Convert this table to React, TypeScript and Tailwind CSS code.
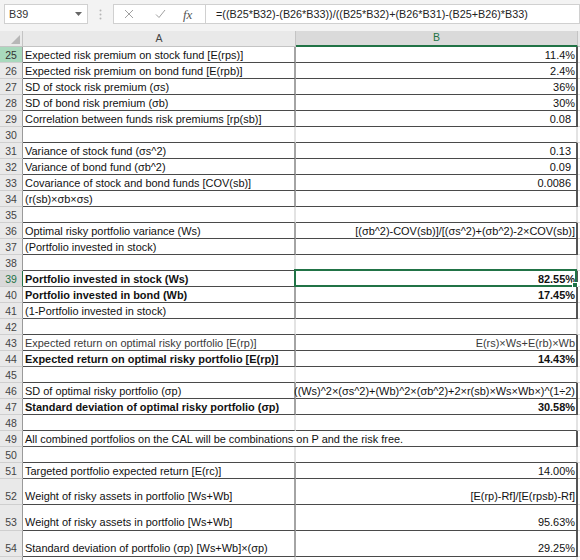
import React from "react";

type Row = {
  n: number;
  a?: string;
  b?: string;
  bold?: boolean;
  num?: boolean;
  bordered?: boolean;
  tall?: boolean;
  merged?: boolean;
  selected?: boolean;
  light?: boolean;
  hideNum?: boolean;
};

const rows: Row[] = [
  { n: 25, a: "Expected risk premium on stock fund [E(rps)]", b: "11.4%", bordered: true },
  { n: 26, a: "Expected risk premium on bond fund [E(rpb)]", b: "2.4%", bordered: true },
  { n: 27, a: "SD of stock risk premium (σs)", b: "36%", bordered: true },
  { n: 28, a: "SD of bond risk premium (σb)", b: "30%", bordered: true },
  { n: 29, a: "Correlation between funds risk premiums [rp(sb)]", b: "0.08", num: true, bordered: true },
  { n: 30 },
  { n: 31, a: "Variance of stock fund (σs^2)", b: "0.13", num: true, bordered: true },
  { n: 32, a: "Variance of bond fund (σb^2)", b: "0.09", num: true, bordered: true },
  { n: 33, a: "Covariance of stock and bond funds [COV(sb)]", b: "0.0086", num: true, bordered: true },
  { n: 34, a: "(r(sb)×σb×σs)", b: "", bordered: true },
  { n: 35 },
  { n: 36, a: "Optimal risky portfolio variance (Ws)", b: "[(σb^2)-COV(sb)]/[(σs^2)+(σb^2)-2×COV(sb)]", bordered: true },
  { n: 37, a: "(Portfolio invested in stock)", b: "", bordered: true },
  { n: 38 },
  { n: 39, a: "Portfolio invested in stock (Ws)", b: "82.55%", bold: true, bordered: true, selected: true },
  { n: 40, a: "Portfolio invested in bond (Wb)", b: "17.45%", bold: true, bordered: true },
  { n: 41, a: "(1-Portfolio invested in stock)", b: "", bordered: true },
  { n: 42 },
  { n: 43, a: "Expected return on optimal risky portfolio [E(rp)]", b: "E(rs)×Ws+E(rb)×Wb", bordered: true, light: true },
  { n: 44, a: "Expected return on optimal risky portfolio [E(rp)]", b: "14.43%", bold: true, bordered: true },
  { n: 45 },
  { n: 46, a: "SD of optimal risky portfolio (σp)", b: "((Ws)^2×(σs^2)+(Wb)^2×(σb^2)+2×r(sb)×Ws×Wb×)^(1÷2)", bordered: true },
  { n: 47, a: "Standard deviation of optimal risky portfolio (σp)", b: "30.58%", bold: true, bordered: true },
  { n: 48 },
  { n: 49, a: "All combined portfolios on the CAL will be combinations on P and the risk free.", bordered: true, merged: true },
  { n: 50 },
  { n: 51, a: "Targeted portfolio expected return [E(rc)]", b: "14.00%", bordered: true },
  { n: 52, a: "Weight of risky assets in portfolio [Ws+Wb]", b: "[E(rp)-Rf]/[E(rpsb)-Rf]", bordered: true, tall: true },
  { n: 53, a: "Weight of risky assets in portfolio [Ws+Wb]", b: "95.63%", bordered: true, tall: true },
  { n: 54, a: "Standard deviation of portfolio (σp) [Ws+Wb]×(σp)", b: "29.25%", bordered: true, tall: true },
  { n: 55, hideNum: true },
];

function SheetRow({ r, next }: { r: Row; next?: Row }) {
  const darkBottom = r.bordered || (next && next.bordered);
  const bottom = darkBottom ? "border-b-[#4a4a4a]" : "border-b-[#dcdcdc]";
  const h = r.tall ? "h-[26px]" : "h-[16px]";
  const align = r.tall ? "items-end pb-[2px]" : "items-center";
  const weight = r.bold ? "font-bold" : "font-normal";
  const color = r.light ? "text-[#3a3a3a]" : "text-[#111]";
  const sep = r.bordered ? "border-r-[#a4a4a4]" : "border-r-[#e3e3e3]";
  const right = r.bordered ? "border-r-[#555]" : "border-r-[#e3e3e3]";
  let headerCls = "bg-[#e9e9e9] text-[#444] border-r-[#9a9a9a]";
  if (r.n === 25) headerCls = "bg-[#a9d9bd] text-[#333] border-r-[#9a9a9a]";
  if (r.selected) headerCls = "bg-[#d9d9d9] text-[#217346] border-r-[#217346]";
  return (
    <div className={`flex ${h} shrink-0`}>
      <div
        className={`w-[23px] shrink-0 box-border border-r border-b border-b-[#cfcfcf] ${headerCls} flex ${align} justify-center text-[10.5px] leading-[12px]`}
      >
        {r.hideNum ? "" : r.n}
      </div>
      {r.merged ? (
        <div
          className={`w-[555px] shrink-0 box-border border-b border-r-2 ${bottom} border-r-[#555] flex ${align} pl-[2px] text-[10.95px] leading-[12px] whitespace-nowrap ${color} ${weight}`}
        >
          {r.a}
        </div>
      ) : (
        <>
          <div
            className={`w-[273px] shrink-0 box-border border-b border-r-2 ${bottom} ${sep} flex ${align} pl-[2px] text-[10.95px] leading-[12px] whitespace-nowrap ${color} ${weight}`}
          >
            {r.a}
          </div>
          <div
            className={`relative w-[282px] shrink-0 box-border border-b border-r-2 ${bottom} ${right} flex ${align} justify-end ${
              r.num ? "pr-[5px]" : "pr-[1px]"
            } text-[10.95px] leading-[12px] whitespace-nowrap ${color} ${weight}`}
          >
            {r.b}
            {r.selected && (
              <div className="absolute -top-[2px] -left-[2px] -right-[1px] -bottom-[1px] border-2 border-[#217346] pointer-events-none">
                <div className="absolute -right-[3px] -bottom-[3px] w-[6px] h-[6px] bg-[#217346] border border-white" />
              </div>
            )}
          </div>
        </>
      )}
      <div className={`flex-1 box-border border-b border-b-[#dcdcdc]`} />
    </div>
  );
}

export default function App() {
  return (
    <div className="w-[580px] h-[560px] overflow-hidden bg-white font-['Liberation_Sans',Arial,sans-serif] flex flex-col">
      {/* Formula bar */}
      <div className="h-[31px] shrink-0 bg-[#f3f3f3] flex items-start pt-[4px]">
        <div className="ml-[4px] w-[84px] h-[20px] bg-white border border-[#d0d0d0] flex items-center justify-between pl-[4px] pr-[5px] text-[10.8px] text-[#333]">
          <span>B39</span>
          <svg width="7" height="4" viewBox="0 0 7 4">
            <polygon points="0,0 7,0 3.5,4" fill="#666" />
          </svg>
        </div>
        <div className="w-[25px] h-[20px] flex items-center justify-center">
          <svg width="3" height="11" viewBox="0 0 3 11">
            <circle cx="1.5" cy="1.5" r="1" fill="#b5b5b5" />
            <circle cx="1.5" cy="5.5" r="1" fill="#b5b5b5" />
            <circle cx="1.5" cy="9.5" r="1" fill="#b5b5b5" />
          </svg>
        </div>
        <div className="flex-1 h-[20px] bg-white border border-[#d0d0d0] flex items-center">
          <div className="w-[92px] h-full flex items-center border-r border-[#d0d0d0]">
            <svg className="ml-[10px]" width="10" height="10" viewBox="0 0 10 10">
              <path d="M1 1 L9 9 M9 1 L1 9" stroke="#a0a0a0" strokeWidth="1" fill="none" />
            </svg>
            <svg className="ml-[21px]" width="11" height="10" viewBox="0 0 11 10">
              <path d="M1 5.5 L4 8.5 L10 1" stroke="#a0a0a0" strokeWidth="1" fill="none" />
            </svg>
            <span className="ml-[17px] font-['Liberation_Serif',serif] italic text-[13px] text-[#555] leading-none">
              fx
            </span>
          </div>
          <div className="pl-[10px] text-[10.8px] text-[#222] whitespace-nowrap">
            =((B25*B32)-(B26*B33))/((B25*B32)+(B26*B31)-(B25+B26)*B33)
          </div>
        </div>
      </div>
      {/* Column headers */}
      <div className="flex h-[16px] shrink-0 bg-[#e9e9e9]">
        <div className="w-[23px] shrink-0 box-border border-r border-b border-[#c4c4c4] flex items-end justify-end pr-[2px] pb-[2px]">
          <svg width="9" height="9" viewBox="0 0 9 9">
            <polygon points="9,0 9,9 0,9" fill="#b7b7b7" />
          </svg>
        </div>
        <div className="w-[273px] shrink-0 box-border border-r border-b border-[#c4c4c4] flex items-center justify-center text-[10.5px] text-[#444]">
          A
        </div>
        <div className="w-[282px] shrink-0 box-border border-b-2 border-b-[#217346] border-r border-r-[#c4c4c4] bg-[#dadada] flex items-center justify-center text-[10.5px] text-[#217346]">
          B
        </div>
        <div className="flex-1 box-border border-b border-[#c4c4c4]" />
      </div>
      {rows.map((r, i) => (
        <SheetRow key={r.n} r={r} next={rows[i + 1]} />
      ))}
    </div>
  );
}
